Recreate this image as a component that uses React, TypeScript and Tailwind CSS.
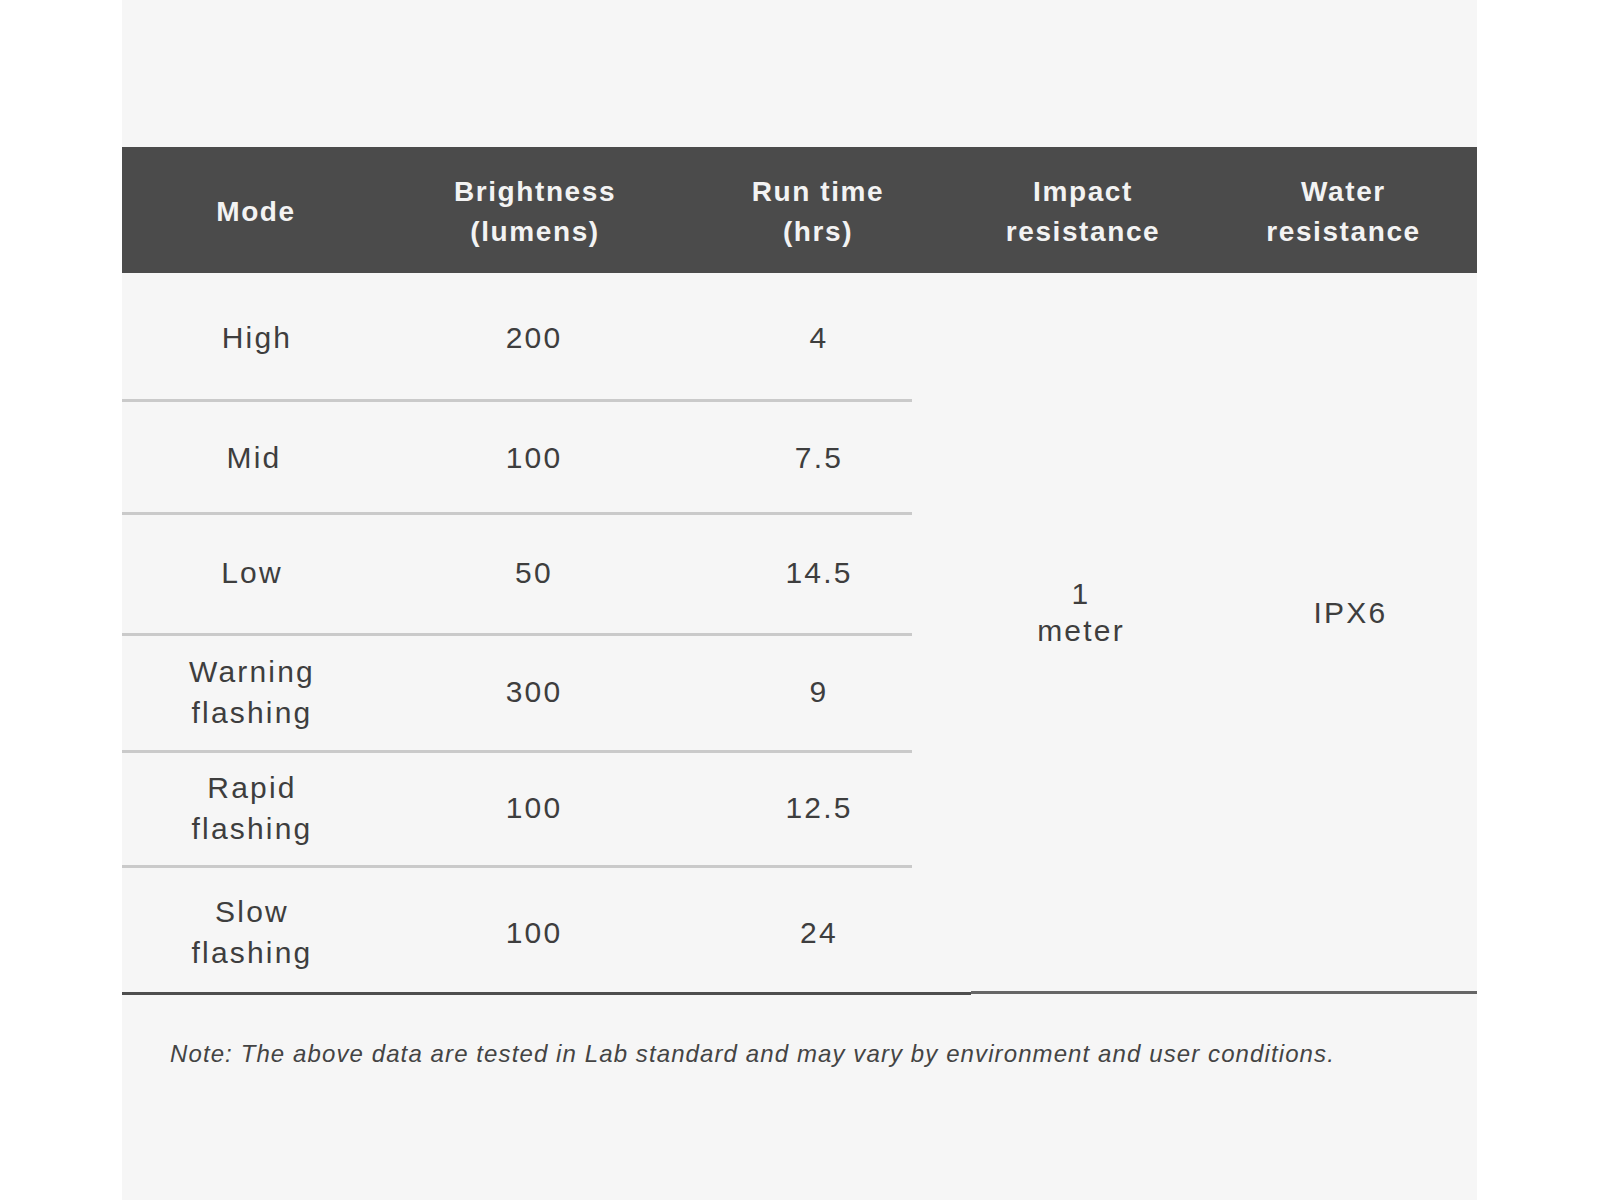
const headers = [
  { lines: ["Mode"], w: "w-[268px]" },
  { lines: ["Brightness", "(lumens)"], w: "w-[290px]" },
  { lines: ["Run time", "(hrs)"], w: "w-[276px]" },
  { lines: ["Impact", "resistance"], w: "w-[254px]" },
  { lines: ["Water", "resistance"], w: "w-[267px]" },
];

// per-row heights and small vertical nudges so text sits like the reference
const rows = [
  { mode: ["High"], lumens: "200", hrs: "4", h: "h-[129px]", pad: "pt-[3px]", ml: "ml-[10px]" },
  { mode: ["Mid"], lumens: "100", hrs: "7.5", h: "h-[113px]", pad: "pt-[1px]", ml: "ml-[4px]" },
  { mode: ["Low"], lumens: "50", hrs: "14.5", h: "h-[121px]", pad: "pb-[3px]", ml: "" },
  { mode: ["Warning", "flashing"], lumens: "300", hrs: "9", h: "h-[117px]", pad: "pb-[3px]", ml: "" },
  { mode: ["Rapid", "flashing"], lumens: "100", hrs: "12.5", h: "h-[115px]", pad: "pb-[3px]", ml: "" },
  { mode: ["Slow", "flashing"], lumens: "100", hrs: "24", h: "h-[123px]", pad: "pt-[5px]", ml: "" },
];

const App = () => {
  return (
    <div className="min-h-[1200px] w-full bg-white font-['Liberation_Sans',Arial,sans-serif]">
      <div className="ml-[122px] w-[1355px] min-h-[1200px] bg-[#f6f6f6] pt-[147px]">
        {/* header */}
        <div className="flex h-[126px] pt-[4px] bg-[#4b4b4b] text-[#f3f3f3]">
          {headers.map((h) => (
            <div
              key={h.lines[0]}
              className={`${h.w} flex flex-col items-center justify-center text-[28px] leading-[40px] font-bold tracking-[1.6px]`}
            >
              {h.lines.map((l) => (
                <span key={l}>{l}</span>
              ))}
            </div>
          ))}
        </div>

        {/* body */}
        <div className="flex text-[30px] tracking-[2.2px] text-[#3e3e3e]">
          <div className="w-[790px] flex flex-col">
            {rows.map((r, i) => (
              <div
                key={r.mode.join(" ")}
                className={`${r.h} ${r.pad} flex items-center ${
                  i < rows.length - 1 ? "border-b-[3px] border-[#cacaca]" : ""
                }`}
              >
                <div className="w-[260px] flex flex-col items-center leading-[41px]">
                  {r.mode.map((m) => (
                    <span key={m} className={r.ml}>
                      {m}
                    </span>
                  ))}
                </div>
                <div className="w-[304px] text-center">{r.lumens}</div>
                <div className="w-[226px] pl-[40px] text-center">{r.hrs}</div>
              </div>
            ))}
          </div>
          <div className="flex-1 flex items-center pb-[40px]">
            <div className="w-[338px] flex flex-col items-center leading-[37px]">
              <span>1</span>
              <span>meter</span>
            </div>
            <div className="flex-1 pr-[26px] text-center">IPX6</div>
          </div>
        </div>

        {/* bottom rule */}
        <div className="flex items-start h-[5px]">
          <div className="w-[849px] mt-[1px] h-[3px] bg-[#4e4e4e]" />
          <div className="flex-1 h-[3px] bg-[#666666]" />
        </div>

        <p className="pl-[48px] pt-[40px] text-[24px] italic tracking-[1.1px] text-[#444444]">
          Note: The above data are tested in Lab standard and may vary by environment and user conditions.
        </p>
      </div>
    </div>
  );
};

export default App;
